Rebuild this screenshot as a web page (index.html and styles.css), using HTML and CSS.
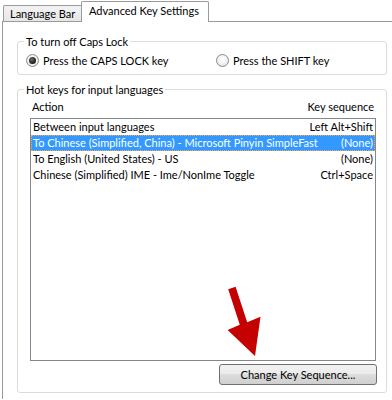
FILE: index.html
```html
<!DOCTYPE html>
<html lang="en">
<head>
  <meta charset="UTF-8">
  <meta name="viewport" content="width=device-width, initial-scale=1.0">
  <title>Text Services and Input Languages</title>
  <link rel="stylesheet" href="styles.css">
</head>
<body>

  <div class="tabs">
    <div class="tab">Language Bar</div>
    <div class="tab active">Advanced Key Settings</div>
  </div>

  <div class="panel">
    <div class="group caps">
      <div class="group-title">To turn off Caps Lock</div>
      <div class="radios">
        <label class="radio checked"><span class="dot"></span>Press the CAPS LOCK key</label>
        <label class="radio"><span class="dot"></span>Press the SHIFT key</label>
      </div>
    </div>

    <div class="group hotkeys">
      <div class="group-title">Hot keys for input languages</div>
      <div class="list-head">
        <span>Action</span>
        <span>Key sequence</span>
      </div>
      <ul class="list">
        <li><span>Between input languages</span><span>Left Alt+Shift</span></li>
        <li class="selected"><span>To Chinese (Simplified, China) - Microsoft Pinyin SimpleFast</span><span>(None)</span></li>
        <li><span>To English (United States) - US</span><span>(None)</span></li>
        <li><span>Chinese (Simplified) IME - Ime/NonIme Toggle</span><span>Ctrl+Space</span></li>
      </ul>
      <div class="actions">
        <button class="btn">Change Key Sequence...</button>
      </div>
    </div>

    <!-- annotation arrow drawn over the dialog -->
    <svg class="arrow" width="40" height="76" viewBox="0 0 40 76">
      <polygon points="5.2,6.3 12.6,3.8 24.2,39.2 37.5,33.8 32,73 4.6,47 16.8,41.8" fill="#c40000"/>
    </svg>
  </div>

</body>
</html>
```

FILE: styles.css
```css
:root {
  --tab-border: #9a9a9a;
  --group-border: #dcdcdc;
  --list-border: #828790;
  --highlight: #3399ff;
  --text-main: #000;
}

* {
  box-sizing: border-box;
  margin: 0;
  padding: 0;
}

body {
  font-family: 'Lato', 'Liberation Sans', sans-serif;
  font-size: 11px;
  line-height: 15px;
  color: var(--text-main);
  background-color: #fff;
  width: 392px;
  height: 400px;
  overflow: hidden;
  white-space: nowrap;
}

/* Zakładki */
.tabs {
  display: flex;
  align-items: flex-end;
  height: 21px;
  padding-left: 3px;
}

.tab {
  height: 16px;
  width: 78px;
  border: 1px solid var(--tab-border);
  border-right: none;
  border-bottom: none;
  background: linear-gradient(#f3f3f3, #e6e6e6);
  line-height: 15px;
  padding-left: 6px;
  border-radius: 2px 0 0 0;
  overflow: hidden;
}

.tab.active {
  position: relative;
  z-index: 1;
  width: 128px;
  height: 21px;
  margin-bottom: -1px;
  border-right: 1px solid var(--tab-border);
  background: #fff;
  padding-left: 7px;
  line-height: 18px;
  border-radius: 2px 2px 0 0;
}

/* Panel z zawartością */
.panel {
  position: relative;
  width: 390px;
  height: 378px;
  margin-left: 2px;
  border-top: 1px solid var(--tab-border);
  border-left: 1px solid var(--tab-border);
  padding-left: 14px;
}

.group {
  width: 370px;
  border: 1px solid var(--group-border);
  border-radius: 3px;
}

.caps {
  margin-top: 19px;
  padding-bottom: 6px;
}

.hotkeys {
  margin-top: 14px;
  padding-bottom: 7px;
}

.group-title {
  display: table;
  margin: -8px 0 0 6px;
  padding: 0 2px;
  background-color: #fff;
}

.radios {
  display: grid;
  grid-template-columns: 190px 1fr;
  margin-top: 4px;
  padding-left: 8px;
}

.radio {
  display: flex;
  align-items: center;
  gap: 4px;
}

.dot {
  width: 13px;
  height: 13px;
  border-radius: 50%;
  border: 1px solid #8b8b8b;
  background: radial-gradient(circle at 50% 40%, #ffffff 0%, #f0f0f0 55%, #d6d6d6 100%);
  display: flex;
  align-items: center;
  justify-content: center;
}

.radio.checked .dot::after {
  content: "";
  width: 7px;
  height: 7px;
  border-radius: 50%;
  background: radial-gradient(circle at 40% 35%, #6a6a6a 0%, #1a1a1a 70%);
}

/* Lista skrótów */
.list-head {
  display: flex;
  justify-content: space-between;
  margin-top: 2px;
  padding: 0 12px 0 14px;
}

.list {
  list-style: none;
  height: 243px;
  margin: 4px 10px 0 12px;
  border: 1px solid var(--list-border);
}

.list li {
  display: flex;
  justify-content: space-between;
  height: 16px;
  line-height: 16px;
  padding: 0 2px;
}

.list li.selected {
  background-color: var(--highlight);
  color: #fff;
  outline: 1px dotted #f5a742;
  outline-offset: -1px;
}

.actions {
  display: flex;
  justify-content: flex-end;
  margin: 3px 9px 0 0;
}

.btn {
  width: 158px;
  height: 21px;
  font-family: inherit;
  font-size: 11px;
  color: var(--text-main);
  border: 1px solid #707070;
  border-radius: 3px;
  background: linear-gradient(#f2f2f2 0%, #ebebeb 50%, #dddddd 50%, #cfcfcf 100%);
}

.arrow {
  position: absolute;
  left: 220px;
  top: 261px;
}
```
